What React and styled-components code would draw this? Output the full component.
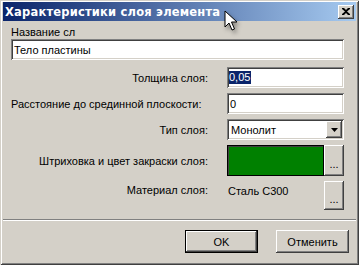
import styled, { createGlobalStyle } from "styled-components";

const GlobalStyle = createGlobalStyle`
  html, body {
    margin: 0;
    padding: 0;
    background: #d4d0c8;
  }
  * {
    box-sizing: border-box;
  }
`;

const raised = `
  box-shadow: inset -1px -1px #404040, inset 1px 1px #ffffff,
    inset -2px -2px #808080, inset 2px 2px #d4d0c8;
`;

const sunken = `
  box-shadow: inset 1px 1px #808080, inset -1px -1px #ffffff,
    inset 2px 2px #404040, inset -2px -2px #d4d0c8;
`;

function App() {
  return (
    <>
      <GlobalStyle />
      <Window>
        <TitleBar>
          <Title>Характеристики слоя элемента</Title>
          <CloseButton>
            <svg width="8" height="7" viewBox="0 0 8 7">
              <path d="M0 0h2l2 2 2-2h2v1L5 3.5 8 6v1H6L4 5 2 7H0V6l3-2.5L0 1z" fill="#000" />
            </svg>
          </CloseButton>
        </TitleBar>

        <Body>
          <Label>Название сл</Label>
          <Edit>Тело пластины</Edit>

          <Form>
            <FieldLabel>Толщина слоя:</FieldLabel>
            <Edit>
              <Selected>0,05</Selected>
            </Edit>

            <FieldLabel $left>Расстояние до срединной плоскости:</FieldLabel>
            <Edit>0</Edit>

            <FieldLabel>Тип слоя:</FieldLabel>
            <Combo>
              <span>Монолит</span>
              <DropButton>
                <svg width="7" height="4" viewBox="0 0 7 4">
                  <path d="M0 0h7L3.5 4z" fill="#000" />
                </svg>
              </DropButton>
            </Combo>

            <FieldLabel>Штриховка и цвет закраски слоя:</FieldLabel>
            <Picker>
              <Swatch $color="#008000" />
              <Ellipsis>...</Ellipsis>
            </Picker>

            <FieldLabel $top>Материал слоя:</FieldLabel>
            <Picker>
              <Value>Сталь С300</Value>
              <Ellipsis>...</Ellipsis>
            </Picker>
          </Form>
        </Body>

        <Separator />

        <Footer>
          <Button $default>OK</Button>
          <Button>Отменить</Button>
        </Footer>

        <Cursor width="14" height="22" viewBox="0 0 14 22">
          <path
            d="M1 1v16l4-4 3 7 2.5-1-3-7h5.5z"
            fill="#fff"
            stroke="#000"
            strokeWidth="1"
            strokeLinejoin="miter"
          />
        </Cursor>
      </Window>
    </>
  );
}

const Window = styled.div`
  position: relative;
  width: 359px;
  height: 265px;
  display: flex;
  flex-direction: column;
  background: #d4d0c8;
  padding: 2px 3px 3px 3px;
  box-shadow: inset 1px 1px #d4d0c8, inset -1px -1px #404040,
    inset 2px 2px #ffffff, inset -2px -2px #808080;
  font-family: "Liberation Sans", Arial, sans-serif;
  font-size: 11px;
  color: #000;
`;

const TitleBar = styled.div`
  height: 19px;
  display: flex;
  align-items: center;
  justify-content: space-between;
  padding: 0 2px 0 2px;
  background: linear-gradient(to right, #0a246a, #a6caf0);
`;

const Title = styled.span`
  font-family: "DejaVu Sans", Verdana, sans-serif;
  font-weight: bold;
  font-size: 11.5px;
  color: #fff;
  letter-spacing: 0.2px;
`;

const CloseButton = styled.div`
  width: 16px;
  height: 14px;
  display: flex;
  align-items: center;
  justify-content: center;
  background: #d4d0c8;
  ${raised}
`;

const Body = styled.div`
  display: flex;
  flex-direction: column;
  padding: 4px 12px 0 8px;
`;

const Label = styled.div`
  height: 14px;
  line-height: 14px;
`;

const Edit = styled.div`
  height: 21px;
  display: flex;
  align-items: center;
  padding: 0 3px;
  background: #fff;
  ${sunken}
  white-space: nowrap;
`;

const Selected = styled.span`
  background: #0a246a;
  color: #fff;
  line-height: 13px;
  padding: 0 1px 0 0;
  margin-left: -1px;
`;

const Form = styled.div`
  display: grid;
  grid-template-columns: 1fr 117px;
  grid-template-rows: 21px 21px 21px 31px 29px;
  column-gap: 18px;
  row-gap: 5px;
  margin-top: 7px;
`;

const FieldLabel = styled.div`
  display: flex;
  align-items: ${(p) => (p.$top ? "flex-start" : "center")};
  justify-content: ${(p) => (p.$left ? "flex-start" : "flex-end")};
  padding-top: ${(p) => (p.$top ? "3px" : "0")};
  padding-right: ${(p) => (p.$left ? "0" : "1px")};
  white-space: nowrap;
`;

const Combo = styled(Edit)`
  justify-content: space-between;
  padding: 2px 2px 2px 4px;
`;

const DropButton = styled.div`
  width: 16px;
  height: 17px;
  display: flex;
  align-items: center;
  justify-content: center;
  background: #d4d0c8;
  ${raised}
`;

const Picker = styled.div`
  display: flex;
  align-items: stretch;
  justify-content: space-between;
`;

const Swatch = styled.div`
  flex: 1;
  background: ${(p) => p.$color};
  border: 1px solid #000;
  box-shadow: inset 1px 1px #404040;
`;

const Value = styled.div`
  padding: 4px 0 0 1px;
`;

const Ellipsis = styled.div`
  width: 20px;
  display: flex;
  align-items: center;
  justify-content: center;
  padding-top: 6px;
  background: #d4d0c8;
  ${raised}
`;

const Separator = styled.div`
  margin-top: 9px;
  height: 2px;
  border-top: 1px solid #808080;
  border-bottom: 1px solid #fff;
`;

const Footer = styled.div`
  display: flex;
  justify-content: flex-end;
  gap: 18px;
  padding: 9px 7px 0 0;
`;

const Button = styled.div`
  width: 73px;
  height: 23px;
  display: flex;
  align-items: center;
  justify-content: center;
  background: #d4d0c8;
  ${(p) =>
    p.$default
      ? `
    border: 1px solid #000;
    box-shadow: inset -1px -1px #404040, inset 1px 1px #ffffff,
      inset -2px -2px #808080;
  `
      : raised}
`;

const Cursor = styled.svg`
  position: absolute;
  left: 224px;
  top: 10px;
  filter: drop-shadow(2px 3px 2px rgba(0, 0, 0, 0.35));
`;

export default App;
